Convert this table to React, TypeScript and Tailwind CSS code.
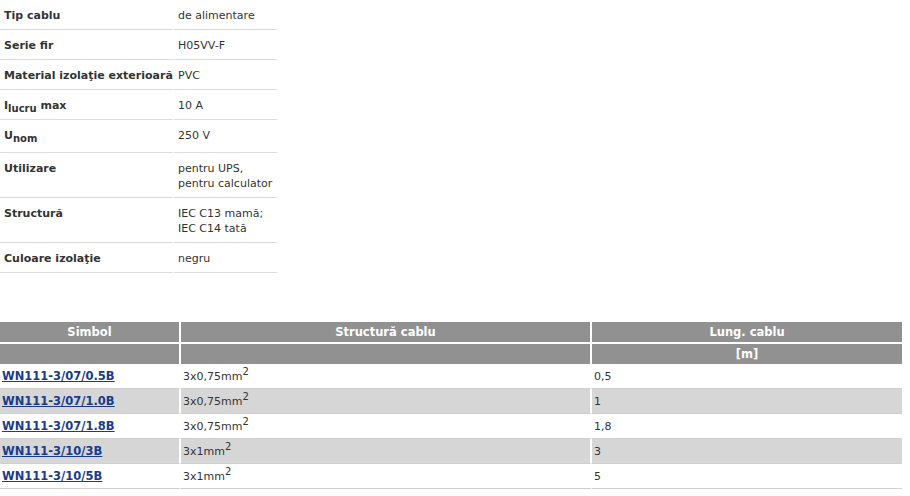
import React from "react";

type Spec = { label: React.ReactNode; value: React.ReactNode; tall?: boolean };

const specs: Spec[] = [
  { label: "Tip cablu", value: "de alimentare" },
  { label: "Serie fir", value: "H05VV-F" },
  { label: "Material izolaţie exterioară", value: "PVC" },
  {
    label: (
      <>
        I<sub className="text-[10px]">lucru</sub> max
      </>
    ),
    value: "10 A",
  },
  {
    label: (
      <>
        U<sub className="text-[10px]">nom</sub>
      </>
    ),
    value: "250 V",
    tall: true,
  },
  {
    label: "Utilizare",
    value: (
      <>
        pentru UPS,
        <br />
        pentru calculator
      </>
    ),
  },
  {
    label: "Structură",
    value: (
      <>
        IEC C13 mamă;
        <br />
        IEC C14 tată
      </>
    ),
  },
  { label: "Culoare izolaţie", value: "negru" },
];

const products = [
  { code: "WN111-3/07/0.5B", section: "3x0,75", len: "0,5" },
  { code: "WN111-3/07/1.0B", section: "3x0,75", len: "1" },
  { code: "WN111-3/07/1.8B", section: "3x0,75", len: "1,8" },
  { code: "WN111-3/10/3B", section: "3x1", len: "3" },
  { code: "WN111-3/10/5B", section: "3x1", len: "5" },
];

export default function App(): React.JSX.Element {
  return (
    <div className="bg-white text-[#333] text-[11px] leading-[15px] font-['DejaVu_Sans',sans-serif]">
      <table className="w-[277px] border-separate border-spacing-0 table-fixed">
        <colgroup>
          <col className="w-[174px]" />
          <col className="w-[103px]" />
        </colgroup>
        <tbody>
          {specs.map((s, i) => (
            <tr key={i}>
              <td
                className={`align-top pl-[4px] pr-0 pt-[8px] font-bold whitespace-nowrap border-b border-[#dcdcdc] border-r-2 border-r-white ${
                  s.tall ? "pb-[9px]" : "pb-[6px]"
                }`}
              >
                {s.label}
              </td>
              <td className="align-top px-[4px] pt-[8px] pb-[6px] whitespace-nowrap border-b border-[#dcdcdc]">
                {s.value}
              </td>
            </tr>
          ))}
        </tbody>
      </table>

      <table className="mt-[49px] w-[902px] border-separate border-spacing-0 table-fixed">
        <colgroup>
          <col className="w-[181px]" />
          <col className="w-[411px]" />
          <col className="w-[310px]" />
        </colgroup>
        <thead>
          <tr className="bg-[#919191] text-white text-[11.5px]">
            <th className="h-[22px] border-b-2 border-white border-r-2 text-center font-bold">Simbol</th>
            <th className="h-[22px] border-b-2 border-white border-r-2 text-center font-bold">Structură cablu</th>
            <th className="h-[22px] border-b-2 border-white text-center font-bold">Lung. cablu</th>
          </tr>
          <tr className="bg-[#919191] text-white text-[11.5px]">
            <th className="h-[20px] border-r-2 border-white"></th>
            <th className="h-[20px] border-r-2 border-white"></th>
            <th className="h-[20px] text-center font-bold">[m]</th>
          </tr>
        </thead>
        <tbody>
          {products.map((p, i) => (
            <tr key={p.code} className={i % 2 === 1 ? "bg-[#d6d6d6]" : "bg-white"}>
              <td className="h-[25px] pl-[2px] border-b border-[#cfcfcf] border-r-2 border-r-white">
                <a href="#" className="font-bold text-[11.5px] text-[#1a3a8c] underline">
                  {p.code}
                </a>
              </td>
              <td className="h-[25px] pl-[2px] border-b border-[#cfcfcf] border-r-2 border-r-white">
                {p.section}mm<sup className="text-[10px]">2</sup>
              </td>
              <td className="h-[25px] pl-[2px] border-b border-[#cfcfcf]">{p.len}</td>
            </tr>
          ))}
        </tbody>
      </table>
    </div>
  );
}
